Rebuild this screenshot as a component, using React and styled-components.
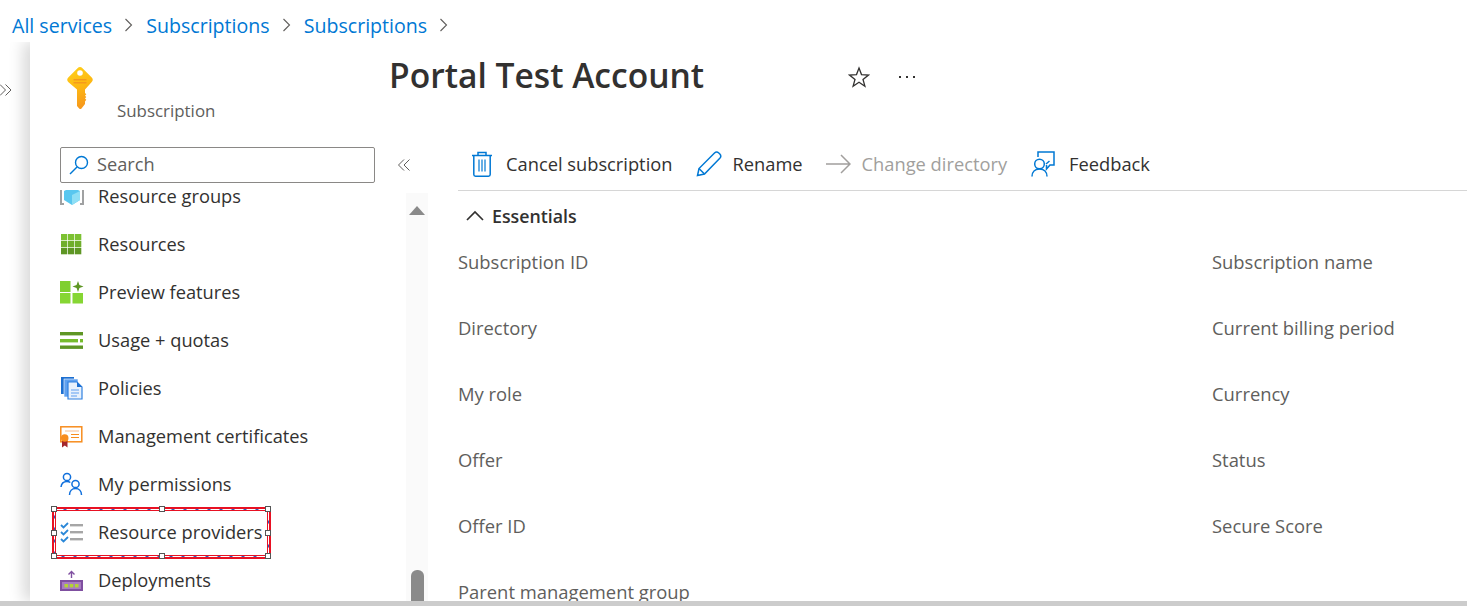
import React from "react";
import styled, { createGlobalStyle } from "styled-components";

const Global = createGlobalStyle`
  html, body {
    margin: 0;
    padding: 0;
    background: #fff;
    overflow: hidden;
  }
  body {
    font-family: "Open Sans", "Noto Sans", "Liberation Sans", sans-serif;
    color: #323130;
  }
`;

const Page = styled.div`
  width: 1467px;
  height: 608px;
  display: flex;
  flex-direction: column;
  overflow: hidden;
`;

const Breadcrumb = styled.nav`
  height: 42px;
  flex: none;
  display: flex;
  align-items: center;
  padding: 8px 0 0 12px;
  box-sizing: border-box;
  font-size: 19.6px;
  color: #0078d4;
`;

const Crumb = styled.span`
  white-space: nowrap;
`;

const CrumbSep = styled.svg`
  width: 9px;
  height: 14px;
  margin: 0 13px 0 12px;
  fill: none;
  stroke: #605e5c;
  stroke-width: 1.1;
`;

const Body = styled.div`
  flex: 1;
  min-height: 0;
  display: flex;
`;

const Gutter = styled.div`
  width: 30px;
  flex: none;
  padding: 41px 0 0 0;
  box-sizing: border-box;
`;

const ExpandIcon = styled.svg`
  display: block;
  width: 13px;
  height: 14px;
  fill: none;
  stroke: #605e5c;
  stroke-width: 1;
`;

const Blade = styled.div`
  flex: 1;
  min-width: 0;
  display: flex;
  flex-direction: column;
  background: #fff;
  box-shadow: -7px 0 14px rgba(0, 0, 0, 0.15);
  clip-path: inset(0 0 0 -30px);
`;

const BladeHeader = styled.header`
  height: 105px;
  flex: none;
  display: flex;
`;

const Identity = styled.div`
  width: 360px;
  flex: none;
  display: flex;
  padding: 23px 0 0 35px;
  box-sizing: border-box;
`;

const KeyIcon = styled.svg`
  width: 30px;
  height: 46px;
  flex: none;
`;

const ResourceType = styled.div`
  margin: 34px 0 0 22px;
  font-size: 16.9px;
  line-height: 24px;
  color: #605e5c;
`;

const Title = styled.h1`
  width: 458px;
  flex: none;
  margin: 0 0 0 -1px;
  padding-top: 8px;
  font-size: 33.6px;
  line-height: 50px;
  font-weight: 600;
  color: #323130;
  white-space: nowrap;
`;

const TitleAction = styled.button`
  width: 24px;
  height: 24px;
  margin: 23px 24px 0 0;
  padding: 0;
  border: 0;
  background: none;
  display: flex;
  align-items: center;
  justify-content: center;
`;

const Lower = styled.div`
  flex: 1;
  min-height: 0;
  display: flex;
`;

const Nav = styled.aside`
  width: 398px;
  flex: none;
  display: flex;
  flex-direction: column;
`;

const NavTop = styled.div`
  height: 43px;
  flex: none;
  display: flex;
  align-items: flex-start;
  padding-left: 30px;
`;

const Search = styled.div`
  width: 315px;
  height: 36px;
  box-sizing: border-box;
  display: flex;
  align-items: center;
  gap: 8px;
  padding: 0 0 3px 8px;
  border: 1px solid #8a8886;
  border-radius: 2px;
  font-size: 18.2px;
  color: #605e5c;
  svg {
    margin-top: 3px;
  }
`;

const Collapse = styled.svg`
  width: 13px;
  height: 14px;
  margin: 11px 0 0 23px;
  fill: none;
  stroke: #605e5c;
  stroke-width: 1;
`;

const NavBody = styled.div`
  flex: 1;
  min-height: 0;
  display: flex;
`;

const MenuClip = styled.div`
  width: 376px;
  flex: none;
  overflow: hidden;
`;

const Menu = styled.ul`
  list-style: none;
  margin: -18px 0 0;
  padding: 0;
`;

const MenuItem = styled.li`
  position: relative;
  height: 48px;
  display: flex;
  align-items: center;
  gap: 14px;
  padding-left: 30px;
  font-size: 18.25px;
  color: #323130;
  white-space: nowrap;
`;

const MenuLabel = styled.span`
  margin-top: -2px;
`;

const MenuIcon = styled.svg`
  width: 24px;
  height: 24px;
  flex: none;
`;

const Selection = styled.div`
  position: absolute;
  left: 22px;
  top: -1px;
  width: 219px;
  height: 52px;
  box-sizing: border-box;
  border: 4px solid #e81123;
`;

const SelectionDash = styled.svg`
  position: absolute;
  left: -4px;
  top: -4px;
  width: 219px;
  height: 52px;
  fill: none;
`;

const Handle = styled.i`
  position: absolute;
  width: 4px;
  height: 4px;
  background: #fff;
  border: 1px solid #555;
  left: ${(p) => p.$x};
  top: ${(p) => p.$y};
  transform: translate(-50%, -50%);
`;

const Track = styled.div`
  width: 22px;
  flex: none;
  margin-top: 3px;
  background: #fafafa;
  display: flex;
  flex-direction: column;
  align-items: center;
  justify-content: space-between;
`;

const ArrowUp = styled.div`
  margin-top: 13px;
  width: 0;
  height: 0;
  border-left: 8px solid transparent;
  border-right: 8px solid transparent;
  border-bottom: 9px solid #8a8a8a;
`;

const Thumb = styled.div`
  width: 13px;
  height: 31px;
  background: #8a8a8a;
  border-radius: 6px 6px 0 0;
`;

const Content = styled.main`
  flex: 1;
  min-width: 0;
  padding-left: 30px;
`;

const Toolbar = styled.div`
  height: 44px;
  box-sizing: border-box;
  display: flex;
  align-items: flex-start;
  padding-left: 11px;
  border-bottom: 1px solid #d6d6d6;
`;

const ToolButton = styled.button`
  height: 32px;
  margin-right: ${(p) => p.$after || 24}px;
  padding: 0;
  border: 0;
  background: none;
  display: flex;
  align-items: center;
  gap: ${(p) => p.$gap || 11}px;
  font: inherit;
  font-size: 18.3px;
  color: ${(p) => (p.disabled ? "#a19f9d" : "#323130")};
  white-space: nowrap;
`;

const ToolIcon = styled.svg`
  height: 26px;
  width: ${(p) => p.$w || 26}px;
  margin-top: 2px;
  flex: none;
  fill: none;
`;

const EssentialsHead = styled.div`
  height: 50px;
  display: flex;
  align-items: center;
  gap: 8px;
  padding: 0 0 0 8px;
  font-size: 17.8px;
  font-weight: 600;
  color: #323130;
`;

const Props = styled.dl`
  margin: 0;
  display: grid;
  grid-template-columns: 754px 1fr;
  grid-auto-rows: 66px;
  align-items: start;
  height: 366px;
  overflow: hidden;
  padding-top: 8px;
`;

const Prop = styled.dt`
  font-size: 18.4px;
  line-height: 26px;
  color: #605e5c;
  white-space: nowrap;
`;

const BottomBar = styled.div`
  height: 5px;
  flex: none;
  margin-bottom: 2px;
  background: #cccccc;
`;

const items = [
  {
    label: "Resource groups",
    icon: (
      <>
        <path d="M2 3H0v18h4v-2H2z M22 3h2v18h-4v-2h2z" fill="#a0a1a2" />
        <path d="M12 3l8 4v9l-8 5-8-5V7z" fill="#59c7ef" />
        <path d="M12 11l8-4v9l-8 5z" fill="#8fdff5" />
      </>
    ),
  },
  {
    label: "Resources",
    icon: (
      <>
        {[2, 9, 16].flatMap((y, r) =>
          [1, 8, 15].map((x) => (
            <rect
              key={`${x}-${y}`}
              x={x}
              y={y}
              width="6.3"
              height="6.3"
              fill={["#7cc132", "#6fae2b", "#5e9624"][r]}
            />
          ))
        )}
      </>
    ),
  },
  {
    label: "Preview features",
    icon: (
      <>
        <rect x="0" y="1" width="10.5" height="11" fill="#7fcf2f" />
        <rect x="0" y="13" width="10.5" height="10.5" fill="#86d633" />
        <rect x="12.5" y="13" width="10.5" height="10.5" fill="#86d633" />
        <path d="M18 1l1.4 4.1 4.1 1.4-4.1 1.4L18 12l-1.4-4.1-4.1-1.4 4.1-1.4z" fill="#5e9624" />
      </>
    ),
  },
  {
    label: "Usage + quotas",
    icon: (
      <>
        <rect x="0" y="4" width="23" height="3.4" fill="#5e9624" />
        <rect x="0" y="11" width="18" height="3.4" fill="#76bc2d" />
        <rect x="20" y="11" width="3" height="3.4" fill="#76bc2d" />
        <rect x="0" y="17.5" width="23" height="3.4" fill="#5e9624" />
      </>
    ),
  },
  {
    label: "Policies",
    icon: (
      <>
        <rect x="1" y="1" width="13" height="17" fill="#1c6fd1" />
        <rect x="4" y="3" width="14" height="18" fill="#5ea0ef" stroke="#fff" strokeWidth="0.6" />
        <path d="M8 6h9l5 5v12H8z" fill="#e8f1fc" stroke="#2f80e0" strokeWidth="1.2" />
        <path d="M17 6l5 5h-5z" fill="#1c6fd1" />
        <path d="M11 14h8M11 17h8M11 20h6" stroke="#5ea0ef" strokeWidth="1.2" />
      </>
    ),
  },
  {
    label: "Management certificates",
    icon: (
      <>
        <rect x="0.8" y="2.8" width="21" height="15" fill="#fff" stroke="#f78d1e" strokeWidth="1.5" />
        <path d="M5 7h14" stroke="#f9c9a0" strokeWidth="1.2" />
        <path d="M11 10.5h8M11 13.5h8" stroke="#f78d1e" strokeWidth="1.2" />
        <path d="M2 15h5.5v8.5l-2.7-2-2.8 2z" fill="#a4262c" />
        <circle cx="4.7" cy="14" r="3.8" fill="#f78d1e" />
      </>
    ),
  },
  {
    label: "My permissions",
    icon: (
      <g fill="none" stroke="#0f6fdc" strokeWidth="1.5">
        <circle cx="7" cy="5" r="3.6" />
        <path d="M1 15c.4-3.4 3-5.5 6-5.5 1.3 0 2.4.3 3.3 1" />
        <circle cx="15.5" cy="12" r="3.6" />
        <path d="M9.5 23c0-4 2.6-6.4 6-6.4s6 2.4 6 6.4" />
      </g>
    ),
  },
  {
    label: "Resource providers",
    selected: true,
    icon: (
      <>
        <g fill="none" stroke="#2b88d8" strokeWidth="1.8">
          <path d="M1 5l2.5 2.5L8 3" />
          <path d="M1 12l2.5 2.5L8 10" />
          <path d="M1 19l2.5 2.5L8 17" />
        </g>
        <g fill="#a6a6a6">
          <rect x="10" y="4" width="13" height="2.4" />
          <rect x="10" y="11" width="13" height="2.4" />
          <rect x="10" y="18" width="13" height="2.4" />
        </g>
      </>
    ),
  },
  {
    label: "Deployments",
    icon: (
      <>
        <rect x="0" y="12" width="23" height="11" fill="#7f4fa0" />
        <rect x="2" y="14" width="19" height="7" fill="#a87cc2" />
        <rect x="4.5" y="16" width="3.6" height="3.4" fill="#b4d335" />
        <rect x="9.7" y="16" width="3.6" height="3.4" fill="#b4d335" />
        <rect x="14.9" y="16" width="3.6" height="3.4" fill="#b4d335" />
        <path d="M11.5 10V3.500M8.500 6.500l3-3 3 3" fill="none" stroke="#7f4fa0" strokeWidth="1.4" />
      </>
    ),
  },
];

const rows = [
  ["Subscription ID", "Subscription name"],
  ["Directory", "Current billing period"],
  ["My role", "Currency"],
  ["Offer", "Status"],
  ["Offer ID", "Secure Score"],
  ["Parent management group", ""],
];

const handles = [
  ["-2px", "-2px"],
  ["50%", "-2px"],
  ["calc(100% + 1px)", "-2px"],
  ["-2px", "50%"],
  ["calc(100% + 1px)", "50%"],
  ["-2px", "calc(100% + 1px)"],
  ["50%", "calc(100% + 1px)"],
  ["calc(100% + 1px)", "calc(100% + 1px)"],
];

export default function App() {
  return (
    <Page>
      <Global />
      <Breadcrumb>
        {["All services", "Subscriptions", "Subscriptions"].map((c, i) => (
          <React.Fragment key={i}>
            <Crumb>{c}</Crumb>
            <CrumbSep viewBox="0 0 9 14">
              <path d="M1.5 1l6 6-6 6" />
            </CrumbSep>
          </React.Fragment>
        ))}
      </Breadcrumb>
      <Body>
        <Gutter>
          <ExpandIcon viewBox="0 0 13 14">
            <path d="M0 1.5L5.5 7 0 12.5M5.5 1.5L11 7l-5.5 5.5" />
          </ExpandIcon>
        </Gutter>
        <Blade>
          <BladeHeader>
            <Identity>
              <KeyIcon viewBox="0 0 30 46">
                <defs>
                  <linearGradient id="keyG" x1="0" y1="0" x2="0.3" y2="1">
                    <stop offset="0" stopColor="#ffd11a" />
                    <stop offset="0.55" stopColor="#fdb913" />
                    <stop offset="1" stopColor="#f79a1c" />
                  </linearGradient>
                </defs>
                <path
                  d="M15 2c.9 0 1.7.4 2.5 1.2l9 9c1.7 1.7 1.7 3.4 0 5.1L20 24.5V28l1.3 1.2-1.3 1.5 1.3 1.3-1.3 1.5 1.3 1.3-1.3 1.6v2.6L16.500 43.500c-.8.8-1.5.8-2.3 0L12 41V24.500L3.500 17.300c-1.700-1.700-1.700-3.400 0-5.100l9-9C13.300 2.400 14.100 2 15 2z"
                  fill="url(#keyG)"
                />
                <circle cx="15" cy="8" r="2.8" fill="#fff" />
                <rect x="8.5" y="14" width="13" height="1.5" fill="#f59a1c" />
                <rect x="8.5" y="17" width="13" height="1.5" fill="#f59a1c" />
              </KeyIcon>
              <ResourceType>Subscription</ResourceType>
            </Identity>
            <Title>Portal Test Account</Title>
            <TitleAction aria-label="Favorite">
              <svg width="22" height="22" viewBox="0 0 22 22" fill="none" stroke="#323130" strokeWidth="1.3">
                <path d="M11 2l2.500 6.600 7 .4-5.500 4.400 1.900 6.800L11 16.300l-5.900 3.900L7 13.400 1.500 9l7-.4z" />
              </svg>
            </TitleAction>
            <TitleAction aria-label="More">
              <svg width="20" height="6" viewBox="0 0 20 6" fill="#323130">
                <rect x="2" y="2" width="2" height="2" />
                <rect x="9" y="2" width="2" height="2" />
                <rect x="16" y="2" width="2" height="2" />
              </svg>
            </TitleAction>
          </BladeHeader>
          <Lower>
            <Nav>
              <NavTop>
                <Search>
                  <svg width="20" height="20" viewBox="0 0 20 20" fill="none" stroke="#0078d4" strokeWidth="1.4">
                    <circle cx="12.5" cy="7.5" r="6" />
                    <path d="M8 12L1 19" />
                  </svg>
                  Search
                </Search>
                <Collapse viewBox="0 0 13 14">
                  <path d="M6 1.5L.5 7 6 12.5M11.500 1.500L6 7l5.500 5.500" />
                </Collapse>
              </NavTop>
              <NavBody>
                <MenuClip>
                  <Menu>
                    {items.map((it) => (
                      <MenuItem key={it.label}>
                        <MenuIcon viewBox="0 0 24 24">{it.icon}</MenuIcon>
                        <MenuLabel>{it.label}</MenuLabel>
                        {it.selected && (
                          <Selection>
                            <SelectionDash viewBox="0 0 219 52">
                              <rect x="2.5" y="2.5" width="214" height="47" stroke="#2b5fc0" strokeWidth="1" />
                              <rect x="2.5" y="2.5" width="214" height="47" stroke="#fff" strokeWidth="1" strokeDasharray="9 3" />
                            </SelectionDash>
                            {handles.map(([x, y]) => (
                              <Handle key={x + y} $x={x} $y={y} />
                            ))}
                          </Selection>
                        )}
                      </MenuItem>
                    ))}
                  </Menu>
                </MenuClip>
                <Track>
                  <ArrowUp />
                  <Thumb />
                </Track>
              </NavBody>
            </Nav>
            <Content>
              <Toolbar>
                <ToolButton>
                  <ToolIcon viewBox="0 0 26 26" stroke="#0078d4" strokeWidth="1.5">
                    <path d="M3 4.5h20M9 4.5V1.500h8v3M4.800 4.500v19c0 1 .6 1.700 1.700 1.700h13c1.100 0 1.700-.7 1.700-1.700v-19" />
                    <path d="M10 8.500v12M13 8.500v12M16 8.500v12" strokeWidth="1.7" stroke="#4a9fe0" />
                  </ToolIcon>
                  Cancel subscription
                </ToolButton>
                <ToolButton $gap={10} $after={23}>
                  <ToolIcon viewBox="0 0 26 26" stroke="#0078d4" strokeWidth="1.5">
                    <path d="M1.500 24.500l1.500-7L18.500 2c1.300-1.200 3-1.200 4.300 0l1 1c1.200 1.300 1.200 3 0 4.300L8.500 23z" />
                    <path d="M3 17.500L8.500 23" />
                  </ToolIcon>
                  Rename
                </ToolButton>
                <ToolButton disabled>
                  <ToolIcon viewBox="0 0 25 26" $w={25} stroke="#a19f9d" strokeWidth="1.5">
                    <path d="M0 13h24M15 4l9 9-9 9" />
                  </ToolIcon>
                  Change directory
                </ToolButton>
                <ToolButton $gap={12}>
                  <ToolIcon viewBox="0 0 26 26" stroke="#0078d4" strokeWidth="1.5">
                    <path d="M7 6V1h16v13h-4l-3.500 4v-4" />
                    <path d="M15 13l3.500-3" />
                    <circle cx="8.500" cy="13" r="4.800" />
                    <path d="M1 25.500c0-4.500 3-7.500 7.500-7.500s7.500 3 7.500 7.500" />
                  </ToolIcon>
                  Feedback
                </ToolButton>
              </Toolbar>
              <EssentialsHead>
                <svg width="18" height="12" viewBox="0 0 18 12" fill="none" stroke="#323130" strokeWidth="1.7">
                  <path d="M1 10l8-8 8 8" />
                </svg>
                Essentials
              </EssentialsHead>
              <Props>
                {rows.flatMap(([a, b]) => [
                  <Prop key={a}>{a}</Prop>,
                  <Prop key={a + "-right"}>{b}</Prop>,
                ])}
              </Props>
            </Content>
          </Lower>
        </Blade>
      </Body>
      <BottomBar />
    </Page>
  );
}
